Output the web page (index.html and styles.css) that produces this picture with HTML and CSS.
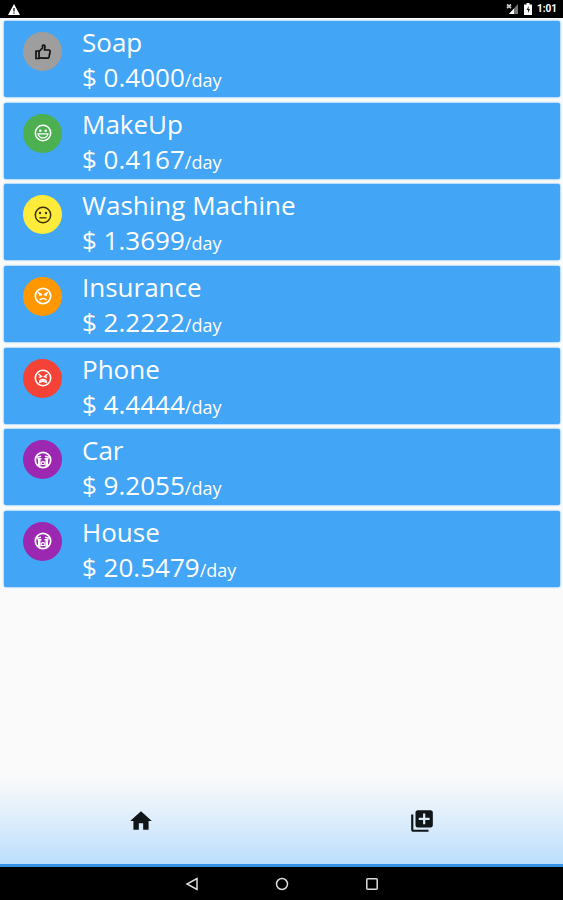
FILE: index.html
```html
<!DOCTYPE html>
<html lang="en">
<head>
<meta charset="utf-8">
<meta name="viewport" content="width=device-width, initial-scale=1">
<title>Daily costs</title>
<link rel="stylesheet" href="styles.css">
</head>
<body>
<svg hidden>
  <symbol id="sad-tears" viewBox="0 0 18 18">
    <circle cx="9" cy="9" r="7.700" fill="none" stroke="currentColor" stroke-width="1.700"/>
    <path d="M3 6.300 7 5.300M11 5.300l4 1M3.500 7.800h4M10.500 7.800h4" fill="none" stroke="currentColor" stroke-width="1.400"/>
    <path d="M4 8h2.500v7.500L4 14zM11.500 8H14v6l-2.500 1.500z" fill="currentColor"/>
    <path d="M7.200 13.500v-2q1.800-1.800 3.600 0v2z" fill="none" stroke="currentColor" stroke-width="1.200"/>
  </symbol>
</svg>
<header class="status">
  <svg class="warning" viewBox="0 0 12 11" aria-label="Warning"><path d="M6 0 12 11H0z" fill="#fff"/><path d="M6 4v3.500M6 8.500v1.300" stroke="#000" stroke-width="1.200"/></svg>
  <div class="status-right">
    <svg class="signal" viewBox="0 0 13 12" aria-label="No signal"><path d="M12 1v10H3z" fill="#777"/><path d="M8 5.500V11H3z" fill="#fff"/><path d="M1 1.500 5 5M5 1.500 1 5" stroke="#ccc" stroke-width="1.800"/></svg>
    <svg class="battery" viewBox="0 0 8 12" aria-label="Battery charging"><path d="M2.500 0h3v1.500H8V12H0V1.500h2.500z" fill="#fff"/><path d="M4.800 3 2.500 7H4v3l2-4H4.500z" fill="#222"/></svg>
    <time class="clock">1:01</time>
  </div>
</header>
<main>
  <ul class="list">
    <li class="card">
      <span class="badge grey"><svg viewBox="0 0 18 18"><path d="M2 8h3v7.500H2zM5 8.500 8.500 5V2.500q2-1.300 2.500 1L10.500 7h4.700q1.300.5.800 2l-1 5q-.3 1.200-1.500 1.200H8L5 14.500" fill="none" stroke="currentColor" stroke-width="1.700" stroke-linejoin="round"/></svg></span>
      <div><h2>Soap</h2><p>$ 0.4000<small>/day</small></p></div>
    </li>
    <li class="card">
      <span class="badge green"><svg viewBox="0 0 18 18"><circle cx="9" cy="9" r="7.700" fill="none" stroke="currentColor" stroke-width="1.500"/><circle cx="6.300" cy="6.800" r="1.300" fill="currentColor"/><circle cx="11.700" cy="6.800" r="1.300" fill="currentColor"/><path d="M4 9.800h10q-1 4-5 4t-5-4z" fill="none" stroke="currentColor" stroke-width="1.200"/></svg></span>
      <div><h2>MakeUp</h2><p>$ 0.4167<small>/day</small></p></div>
    </li>
    <li class="card">
      <span class="badge yellow"><svg viewBox="0 0 18 18"><circle cx="9" cy="9" r="7.700" fill="none" stroke="currentColor" stroke-width="1.500"/><circle cx="6" cy="7" r="1.200" fill="currentColor"/><circle cx="12" cy="7" r="1.200" fill="currentColor"/><path d="M5.500 11.800h7" stroke="currentColor" stroke-width="1.300"/></svg></span>
      <div><h2>Washing Machine</h2><p>$ 1.3699<small>/day</small></p></div>
    </li>
    <li class="card">
      <span class="badge orange"><svg viewBox="0 0 18 18"><circle cx="9" cy="9" r="7.700" fill="none" stroke="currentColor" stroke-width="1.700"/><path d="m4 5.500 4 2.300M14 5.500l-4 2.300M5 8h2.500M10.500 8H13M5.500 13q3.500-2.800 7 0" fill="none" stroke="currentColor" stroke-width="1.500"/></svg></span>
      <div><h2>Insurance</h2><p>$ 2.2222<small>/day</small></p></div>
    </li>
    <li class="card">
      <span class="badge red"><svg viewBox="0 0 18 18"><circle cx="9" cy="9" r="7.700" fill="none" stroke="currentColor" stroke-width="1.600"/><path d="m4.500 5 3 2.500-2.500 1M13.500 5l-3 2.500 2.500 1M5.500 13.500q0-3 3.500-3t3.500 3l-3.500-1.500z" fill="none" stroke="currentColor" stroke-width="1.400"/></svg></span>
      <div><h2>Phone</h2><p>$ 4.4444<small>/day</small></p></div>
    </li>
    <li class="card">
      <span class="badge purple"><svg><use href="#sad-tears"/></svg></span>
      <div><h2>Car</h2><p>$ 9.2055<small>/day</small></p></div>
    </li>
    <li class="card">
      <span class="badge purple"><svg><use href="#sad-tears"/></svg></span>
      <div><h2>House</h2><p>$ 20.5479<small>/day</small></p></div>
    </li>
  </ul>
</main>
<nav class="tabs" aria-label="Main">
  <button type="button" aria-label="Home"><svg viewBox="0 0 24 24"><path d="M10 20v-6h4v6h5v-8h3L12 3 2 12h3v8z"/></svg></button>
  <button type="button" aria-label="Add item"><svg viewBox="0 0 24 24"><path d="M4 6H2v14c0 1.100.9 2 2 2h14v-2H4V6zm16-4H8c-1.100 0-2 .9-2 2v12c0 1.100.9 2 2 2h12c1.100 0 2-.9 2-2V4c0-1.100-.9-2-2-2zm-1 9h-4v4h-2v-4H9V9h4V5h2v4h4v2z"/></svg></button>
</nav>
<footer class="system">
  <button type="button" aria-label="Back"><svg viewBox="0 0 14 14"><path d="M12 1.500v11L2 7z"/></svg></button>
  <button type="button" aria-label="Home screen"><svg viewBox="0 0 14 14"><circle cx="7" cy="7" r="5.500"/></svg></button>
  <button type="button" aria-label="Recent apps"><svg viewBox="0 0 14 14"><rect x="1.800" y="1.800" width="10.400" height="10.400" rx="1"/></svg></button>
</footer>
</body>
</html>
```
FILE: styles.css
```css
* { box-sizing: border-box; }

body {
  margin: 0;
  min-height: 100vh;
  display: flex;
  flex-direction: column;
  background: #fafafa;
  font-family: "Open Sans", "Noto Sans", sans-serif;
}

svg { display: block; }
svg[hidden] { display: none; }

button {
  display: flex;
  align-items: center;
  justify-content: center;
  padding: 0;
  border: 0;
  background: none;
}

.status {
  display: flex;
  align-items: center;
  justify-content: space-between;
  height: 18px;
  padding: 0 6px 0 8px;
  background: #000;
  color: #fff;
}

.warning { width: 12px; height: 11px; }
.status-right { display: flex; align-items: center; gap: 5px; }
.signal { width: 13px; height: 12px; }
.battery { width: 8px; height: 12px; }
.clock { font: bold 10px/18px Roboto, sans-serif; }

main { flex: 1; }

.list {
  display: grid;
  gap: 1vw;
  margin: 0;
  padding: 3px 3px 3px 4px;
  list-style: none;
}

.card {
  display: flex;
  gap: 20px;
  height: 76px;
  padding: 4px 19px;
  border-radius: 2px;
  background: #42a5f5;
  box-shadow: 0 0 2px #2196f3;
  color: #fff;
}

.card h2, .card p {
  margin: 0;
  font-size: 26px;
  font-weight: 400;
  line-height: 35px;
}

.card small { font-size: 18px; }

.badge {
  display: grid;
  place-items: center;
  width: 39px;
  height: 39px;
  margin-top: 7px;
  border-radius: 50%;
}

.badge svg { width: 18px; height: 18px; }
.grey { background: #9e9e9e; color: #111; }
.green { background: #4caf50; }
.yellow { background: #ffeb3b; color: #3a3205; }
.orange { background: #ff9800; }
.red { background: #f44336; }
.purple { background: #9c27b0; }

.tabs {
  display: grid;
  grid-template-columns: 1fr 1fr;
  height: 90px;
  border-bottom: 3px solid #3492e4;
  background: linear-gradient(#fafafa, #e3f0fb 40%, #bbdefb);
}

.tabs svg { width: 26px; height: 26px; fill: #101518; }

.system {
  display: flex;
  justify-content: center;
  gap: 50px;
  height: 33px;
  background: #000;
}

.system button { width: 40px; }
.system svg { width: 14px; height: 14px; fill: none; stroke: #ddd; stroke-width: 1.5; }
```
